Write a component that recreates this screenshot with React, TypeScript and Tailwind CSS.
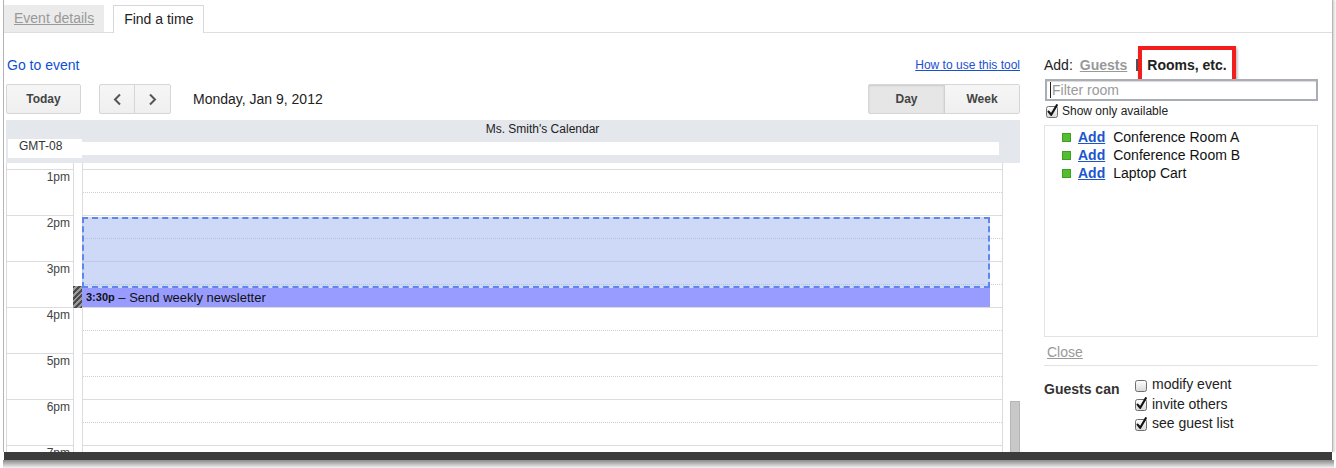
import React from 'react';

// Small Mac-style checkbox, drawn as svg
const Checkbox = ({ checked }: { checked: boolean }) => (
  <svg width="13" height="14" viewBox="0 0 13 14" className="shrink-0">
    <defs>
      <linearGradient id="cbfill" x1="0" y1="0" x2="0" y2="1">
        <stop offset="0" stopColor="#ffffff" />
        <stop offset="1" stopColor="#d8d8d8" />
      </linearGradient>
    </defs>
    <rect x="0.5" y="2.5" width="11" height="11" rx="2" fill="url(#cbfill)" stroke="#6e6e6e" />
    {checked && (
      <path d="M2.6 7.6 L5.2 10.8 L10.8 1.2" fill="none" stroke="#151515" strokeWidth="2.2" strokeLinecap="round" strokeLinejoin="round" />
    )}
  </svg>
);

const hours = ['1pm', '2pm', '3pm', '4pm', '5pm', '6pm', '7pm'];

const rooms = ['Conference Room A', 'Conference Room B', 'Laptop Cart'];

const btn =
  'flex items-center justify-center border border-[#d6d6d6] bg-gradient-to-b from-[#f6f6f6] to-[#efefef] text-[12px] font-bold text-[#444]';

export default function App() {
  return (
    <div className="relative h-[468px] w-[1336px] overflow-hidden bg-white font-['Liberation_Sans',Arial,sans-serif] text-[#222]">
      {/* window */}
      <div className="ml-[3px] flex h-[452px] w-[1330px] flex-col overflow-hidden border-l border-r border-[#b4b4b4] bg-white shadow-[2px_0_2px_rgba(0,0,0,0.15)]">
        {/* tabs */}
        <div className="flex h-[33px] shrink-0 items-end border-b border-[#dedede]">
          <div className="flex h-[27px] items-center bg-[#ebebeb] px-[10px] text-[14px] text-[#999] underline">
            Event details
          </div>
          <div className="mb-[-1px] ml-[9px] flex h-[28px] items-center border border-b-0 border-[#d8d8d8] bg-white px-[10px] text-[14px] text-[#222]">
            Find a time
          </div>
        </div>

        <div className="flex flex-1">
          {/* calendar column */}
          <div className="ml-[2px] flex w-[1014px] flex-col">
            <div className="mt-[23px] flex h-[18px] items-center justify-between">
              <span className="pl-[1px] text-[14px] text-[#0f50d2]">Go to event</span>
              <span className="text-[12px] text-[#1a4fd0] underline">How to use this tool</span>
            </div>

            {/* toolbar */}
            <div className="mt-[10px] flex h-[30px] items-center">
              <div className={`${btn} h-[30px] w-[75px] rounded-[2px]`}>Today</div>
              <div className="ml-[18px] flex h-[30px] rounded-[2px] border border-[#d6d6d6] bg-gradient-to-b from-[#f6f6f6] to-[#efefef]">
                <div className="flex w-[35px] items-center justify-center border-r border-[#d6d6d6]">
                  <svg width="9" height="13" viewBox="0 0 9 13">
                    <polyline points="7,1.5 2,6.5 7,11.5" fill="none" stroke="#555" strokeWidth="2" />
                  </svg>
                </div>
                <div className="flex w-[35px] items-center justify-center">
                  <svg width="9" height="13" viewBox="0 0 9 13">
                    <polyline points="2,1.5 7,6.5 2,11.5" fill="none" stroke="#555" strokeWidth="2" />
                  </svg>
                </div>
              </div>
              <span className="ml-[22px] text-[14px] text-[#222]">Monday, Jan 9, 2012</span>
              <div className="ml-auto flex h-[30px] rounded-[2px] border border-[#d6d6d6]">
                <div className="flex w-[76px] items-center justify-center border-r border-[#d0d0d0] bg-[#e6e6e6] text-[12px] font-bold text-[#444] shadow-[inset_0_1px_2px_rgba(0,0,0,0.12)]">
                  Day
                </div>
                <div className="flex w-[74px] items-center justify-center bg-gradient-to-b from-[#f6f6f6] to-[#efefef] text-[12px] font-bold text-[#444]">
                  Week
                </div>
              </div>
            </div>

            {/* calendar header */}
            <div className="mt-[6px] flex h-[43px] flex-col bg-[#e4e7ec]">
              <div className="h-[19px] pl-[77px] pr-[18px] text-center text-[12px] leading-[19px] text-[#222]">
                Ms. Smith&apos;s Calendar
              </div>
              <div className="flex h-[19px]">
                <div className="ml-[2px] h-[19px] w-[74px] bg-white pl-[11px] text-[12px] leading-[14px] text-[#333]">
                  GMT-08
                </div>
                <div className="mr-[21px] mt-[3px] h-[13px] flex-1 bg-white" />
              </div>
            </div>

            {/* time grid */}
            <div className="flex">
              <div className="w-[68px] border-l border-r border-[#dcdcdc]">
                <div className="h-[6px]" />
                {hours.map((h) => (
                  <div key={h} className="h-[46px] border-t border-[#dcdcdc] pr-[3px] text-right text-[12px] leading-[14px] text-[#444]">
                    {h}
                  </div>
                ))}
              </div>
              <div className="relative w-[9px] border-r border-[#dcdcdc]">
                <div className="absolute left-[-1px] top-[123px] h-[22px] w-[9px] bg-[repeating-linear-gradient(135deg,#4a4a4a_0_2px,#9a9a9a_2px_4px)]" />
              </div>
              <div className="relative w-[920px] border-r border-[#dcdcdc]">
                <div className="h-[6px]" />
                {hours.map((h) => (
                  <div key={h} className="h-[46px] border-t border-[#dcdcdc]">
                    <div className="h-[23px] border-b border-dotted border-[#cfcfcf]" />
                  </div>
                ))}
                {/* selected slot */}
                <div className="absolute left-[-1px] top-[54px] h-[71px] w-[908px] border-2 border-dashed border-[#5f86ea] bg-[#9db3ef]/50" />
                {/* event */}
                <div className="absolute left-[-1px] top-[125px] flex h-[19px] w-[908px] items-center bg-[#999cff] pl-[4px] text-[13px] text-[#111]">
                  <span className="text-[11px] font-bold">3:30p</span>
                  <span>&nbsp;– Send weekly newsletter</span>
                </div>
              </div>
              <div className="relative w-[17px]">
                <div className="absolute left-[7px] top-[238px] h-[60px] w-[10px] border border-[#b6b6b6] bg-[#c8c8c8]" />
              </div>
            </div>
          </div>

          {/* right panel */}
          <div className="relative ml-[24px] flex w-[274px] flex-col">
            <div className="mt-[23px] flex h-[18px] items-center text-[14px]">
              <span className="text-[#222]">Add:</span>
              <span className="ml-[7px] font-bold text-[#999] underline">Guests</span>
              <span className="ml-[9px] h-[12px] w-[2px] bg-[#555]" />
              <span className="ml-[9px] font-bold text-[#222]">Rooms, etc.</span>
            </div>
            {/* annotation box */}
            <div className="absolute left-[94px] top-[13px] h-[39px] w-[98px] border-[4px] border-[#f21d1d] shadow-[1px_2px_3px_rgba(0,0,0,0.35)]" />

            <div className="relative ml-[1px] mt-[5px] flex h-[22px] w-[273px] items-center border-2 border-[#a9aeb6] bg-white pl-[3px] text-[14px] text-[#9a9a9a] shadow-[inset_0_1px_1px_rgba(0,0,0,0.15)]">
              <span className="mr-[1px] h-[16px] w-px bg-[#222]" />
              Filter room
            </div>

            <div className="mt-[3px] flex h-[14px] items-center pl-[2px] text-[12px] text-[#222]">
              <Checkbox checked />
              <span className="ml-[3px]">Show only available</span>
            </div>

            <div className="mt-[7px] h-[212px] border border-[#e3e3e3] pt-[2px]">
              {rooms.map((r) => (
                <div key={r} className="flex h-[18px] items-center text-[14px]">
                  <span className="ml-[17px] h-[9px] w-[9px] border border-[#3f9f22] bg-[#55be30]" />
                  <span className="ml-[7px] font-bold text-[#1c55cc] underline">Add</span>
                  <span className="ml-[8px] text-[#111]">{r}</span>
                </div>
              ))}
            </div>

            <div className="mt-[7px] h-[16px] pl-[3px] text-[14px] leading-[16px] text-[#999] underline">Close</div>

            <div className="mt-[5px] border-t border-[#e3e3e3]" />

            <div className="mt-[9px] flex">
              <div className="w-[91px] pt-[5px] text-[14px] font-bold leading-[18px] text-[#333]">Guests can</div>
              <div className="flex flex-col">
                {[
                  ['modify event', false],
                  ['invite others', true],
                  ['see guest list', true],
                ].map(([label, on]) => (
                  <div key={label as string} className="flex h-[19.5px] items-center text-[14px] text-[#222]">
                    <Checkbox checked={on as boolean} />
                    <span className="ml-[4px]">{label as string}</span>
                  </div>
                ))}
              </div>
            </div>
          </div>
        </div>
      </div>

      {/* window bottom edge */}
      <div className="ml-[4px] h-[8px] w-[1328px] bg-[#3c3c3c]" />
      <div className="ml-[3px] h-[8px] w-[1331px] bg-gradient-to-b from-[#8a8a8a] to-[#f4f4f4]" />
    </div>
  );
}
